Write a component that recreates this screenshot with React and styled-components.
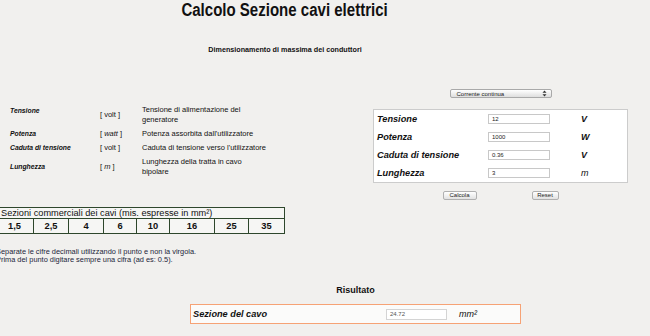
import React from 'react';
import styled, { createGlobalStyle } from 'styled-components';

const GlobalStyle = createGlobalStyle`
    html, body {
        margin: 0;
        padding: 0;
        background-color: #f1f0ee;
        font-family: "Liberation Sans", Arial, sans-serif;
        color: #111111;
        overflow: hidden;
    }
`

const Page = styled.div`
    width: 650px;
    height: 336px;
    overflow: hidden;
`

const Header = styled.div`
    width: 570px;
    text-align: center;
`

const Title = styled.h1`
    display: inline-block;
    margin: 0;
    font-size: 18px;
    line-height: 20px;
    font-weight: bold;
    transform: scaleX(0.835);
    transform-origin: center;
`

const Subtitle = styled.h2`
    margin: 25px 0 0 0;
    font-size: 7.2px;
    line-height: 10px;
    font-weight: bold;
`

const Main = styled.div`
    display: flex;
    gap: 88px;
    margin-top: 31px;
`

const LeftColumn = styled.div`
    width: 290px;
    margin-left: -5px;
`

const RightColumn = styled.div`
    width: 255px;
    display: flex;
    flex-direction: column;
    align-items: center;
`

const DescTable = styled.div`
    margin: 17px 0 0 15px;
    display: grid;
    grid-template-columns: 90px 42px auto;
    font-size: 7.5px;
    line-height: 10px;
`

const DescLabel = styled.div`
    font-weight: bold;
    font-style: italic;
    font-size: 6.8px;
    align-self: ${props => props.top ? 'start' : 'center'};
    padding-top: ${props => props.top ? '3px' : '0'};
`

const DescUnit = styled.div`
    align-self: center;
    padding: 2px 0;

    em {
        font-style: italic;
    }
`

const DescText = styled.div`
    padding: 2px 0;
    white-space: nowrap;
`

const SectionTable = styled.div`
    margin-top: 28px;
    border: 1.5px solid #2e472c;
    background-color: #f6f6f4;
`

const SectionHeader = styled.div`
    font-size: 9.2px;
    line-height: 10px;
    padding-left: 5px;
    border-bottom: 1.5px solid #2e472c;
    white-space: nowrap;
`

const SectionRow = styled.div`
    display: grid;
    grid-template-columns: 37px 35px 35px 33px 33px 45px 34px 1fr;
`

const SectionCell = styled.div`
    font-size: 9.3px;
    font-weight: bold;
    line-height: 14px;
    text-align: center;
    border-left: ${props => props.first ? 'none' : '1.5px solid #2e472c'};
`

const Notes = styled.p`
    margin: 14px 0 0 1px;
    font-size: 7.4px;
    line-height: 8px;
    color: #1b1f3a;
    white-space: nowrap;
`

const SelectBox = styled.div`
    margin-top: 3px;
    width: 102px;
    height: 9px;
    box-sizing: border-box;
    border: 1px solid #a9a9a9;
    border-radius: 2px;
    background: linear-gradient(#ffffff, #dedede);
    display: flex;
    align-items: center;
    justify-content: space-between;
    padding: 0 4px 0 6px;
    font-size: 6px;
    color: #222222;
`

const FormBox = styled.div`
    margin-top: 11px;
    width: 255px;
    box-sizing: border-box;
    border: 1px solid #cccccc;
    background-color: #ffffff;
    padding: 0 0 0 3px;
    display: grid;
    grid-template-columns: 111px 62px 1fr;
    grid-auto-rows: 18px;
    align-items: center;
`

const FieldLabel = styled.div`
    font-weight: bold;
    font-style: italic;
    font-size: 9.2px;
    white-space: nowrap;
`

const Field = styled.div`
    height: 10px;
    box-sizing: border-box;
    border: 1px solid #c8c8c8;
    background-color: #ffffff;
    font-size: 6px;
    line-height: 8px;
    padding-left: 3px;
    color: ${props => props.muted ? '#555555' : '#222222'};
    border-color: ${props => props.muted ? '#d4d4d4' : '#c8c8c8'};
`

const Unit = styled.div`
    padding-left: ${props => props.pad || 31}px;
    font-weight: ${props => props.bold ? 'bold' : 'normal'};
    font-style: italic;
    font-size: 9px;
`

const Buttons = styled.div`
    margin-top: 8px;
    display: flex;
    gap: 55px;
`

const Button = styled.button`
    width: ${props => props.w}px;
    height: 9px;
    padding: 0;
    box-sizing: border-box;
    border: 1px solid #b0b0b0;
    border-radius: 2px;
    background: linear-gradient(#ffffff, #e2e2e2);
    font-family: "Liberation Sans", Arial, sans-serif;
    font-size: 6px;
    line-height: 7px;
    color: #222222;
`

const Result = styled.div`
    margin: 21px 0 0 190px;
    width: 331px;
`

const ResultTitle = styled.h3`
    margin: 0;
    text-align: center;
    font-size: 9px;
    line-height: 11px;
    font-weight: bold;
`

const ResultBox = styled.div`
    margin-top: 8px;
    box-sizing: border-box;
    height: 20px;
    border: 1.5px solid #f6a275;
    background-color: #fbfbfa;
    padding-left: 2px;
    display: grid;
    grid-template-columns: 193px 61px 1fr;
    align-items: center;
`

const ResultField = styled(Field)`
    height: 11px;
`

const descriptions = [
    { label: 'Tensione', unit: 'volt', text: ['Tensione di alimentazione del', 'generatore'], top: true },
    { label: 'Potenza', unit: 'watt', italic: true, text: ["Potenza assorbita dall'utilizzatore"] },
    { label: 'Caduta di tensione', unit: 'volt', text: ["Caduta di tensione verso l'utilizzatore"] },
    { label: 'Lunghezza', unit: 'm', italic: true, text: ['Lunghezza della tratta in cavo', 'bipolare'] },
]

const fields = [
    { label: 'Tensione', value: '12', unit: 'V' },
    { label: 'Potenza', value: '1000', unit: 'W' },
    { label: 'Caduta di tensione', value: '0.36', unit: 'V' },
    { label: 'Lunghezza', value: '3', unit: 'm' },
]

const sections = ['1,5', '2,5', '4', '6', '10', '16', '25', '35']

const SelectArrows = () => (
    <svg width="5" height="7" viewBox="0 0 5 7">
        <path d="M2.5 0.5 L4.5 2.8 L0.5 2.8 Z" fill="#333" />
        <path d="M2.5 6.5 L4.5 4.2 L0.5 4.2 Z" fill="#333" />
    </svg>
)

const App = () => {
    return (
        <Page>
            <GlobalStyle />
            <Header>
                <Title>Calcolo Sezione cavi elettrici</Title>
                <Subtitle>Dimensionamento di massima dei conduttori</Subtitle>
            </Header>
            <Main>
                <LeftColumn>
                    <DescTable>
                        {descriptions.map(d => (
                            <React.Fragment key={d.label}>
                                <DescLabel top={d.top}>{d.label}</DescLabel>
                                <DescUnit>[ {d.italic ? <em>{d.unit}</em> : d.unit} ]</DescUnit>
                                <DescText>
                                    {d.text.map((line, i) => (
                                        <React.Fragment key={i}>{i > 0 && <br />}{line}</React.Fragment>
                                    ))}
                                </DescText>
                            </React.Fragment>
                        ))}
                    </DescTable>
                    <SectionTable>
                        <SectionHeader>Sezioni commerciali dei cavi (mis. espresse in mm²)</SectionHeader>
                        <SectionRow>
                            {sections.map((s, i) => (
                                <SectionCell key={s} first={i === 0}>{s}</SectionCell>
                            ))}
                        </SectionRow>
                    </SectionTable>
                    <Notes>
                        Separate le cifre decimali utilizzando il punto e non la virgola.<br />
                        Prima del punto digitare sempre una cifra (ad es: 0.5).
                    </Notes>
                </LeftColumn>
                <RightColumn>
                    <SelectBox>
                        <span>Corrente continua</span>
                        <SelectArrows />
                    </SelectBox>
                    <FormBox>
                        {fields.map(f => (
                            <React.Fragment key={f.label}>
                                <FieldLabel>{f.label}</FieldLabel>
                                <Field>{f.value}</Field>
                                <Unit bold={f.unit !== 'm'}>{f.unit}</Unit>
                            </React.Fragment>
                        ))}
                    </FormBox>
                    <Buttons>
                        <Button w={34}>Calcola</Button>
                        <Button w={27}>Reset</Button>
                    </Buttons>
                </RightColumn>
            </Main>
            <Result>
                <ResultTitle>Risultato</ResultTitle>
                <ResultBox>
                    <FieldLabel>Sezione del cavo</FieldLabel>
                    <ResultField muted>24.72</ResultField>
                    <Unit pad={12}>mm²</Unit>
                </ResultBox>
            </Result>
        </Page>
    );
};

export default App;
